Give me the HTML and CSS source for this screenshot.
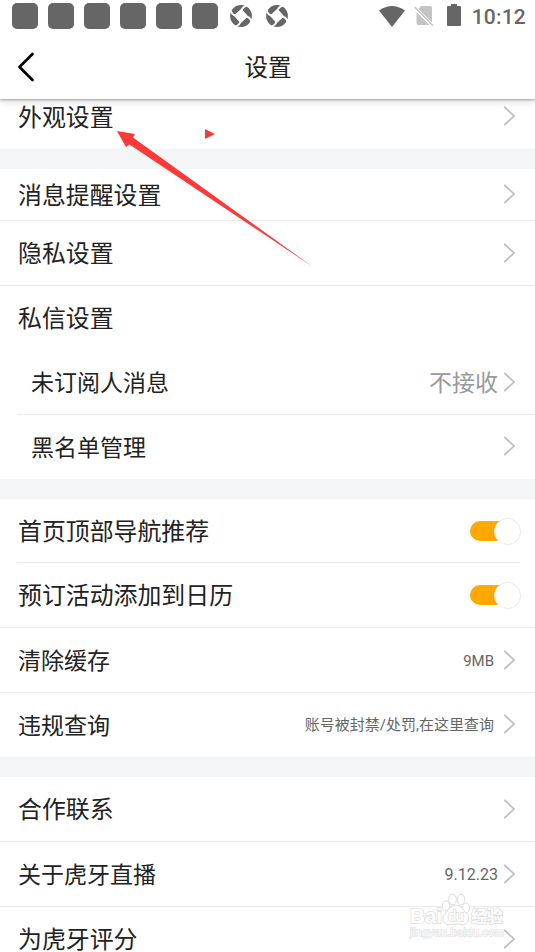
FILE: index.html
```html
<!DOCTYPE html>
<html lang="zh-CN">
<head>
<meta charset="utf-8">
<title>设置</title>
<link rel="stylesheet" href="styles.css">
</head>
<body>
<svg class="defs" width="0" height="0" aria-hidden="true">
  <symbol id="chev" viewBox="0 0 12 20"><path d="M1.300 .8L11 10L1.300 19.200" fill="none" stroke="#bdbdbd" stroke-width="1.700"/></symbol>
  <symbol id="swirl" viewBox="0 0 22 22">
    <circle cx="11" cy="11" r="10.9" fill="#666"/>
    <g fill="none" stroke="#fff" stroke-width="2">
      <path d="M17.500 0Q12.500 2 11.500 5L5 11"/>
      <path d="M17.500 0Q12.500 2 11.500 5L5 11" transform="rotate(90 11 11)"/>
      <path d="M17.500 0Q12.500 2 11.500 5L5 11" transform="rotate(180 11 11)"/>
      <path d="M17.500 0Q12.500 2 11.500 5L5 11" transform="rotate(270 11 11)"/>
    </g>
    <path d="M11.500 4.500L17.500 11.500L10.500 17.500L4.500 10.500Z" fill="#fff"/>
  </symbol>
</svg>
<div class="screen">
  <header class="top">
    <div class="status">
      <div class="apps"><i></i><i></i><i></i><i></i><i></i><i></i></div>
      <svg class="swirl"><use href="#swirl"/></svg>
      <svg class="swirl"><use href="#swirl"/></svg>
      <div class="system">
        <svg width="26" height="21" viewBox="0 0 26 21"><path d="M0 4.500Q13-4.500 26 4.500L13 21Z" fill="#666"/></svg>
        <svg class="sim" width="20" height="22" viewBox="0 0 20 22"><path d="M7 1H16Q18 1 18 3V17.500L4.500 4ZM2.500 7L15.500 20H4.500Q2.500 20 2.500 18Z" fill="#c4c4c4"/><path d="M.7 2L19 20.800" stroke="#c4c4c4" stroke-width="1.600"/></svg>
        <svg class="battery" width="14" height="22" viewBox="0 0 14 22"><path d="M4 0H10V2H13Q14 2 14 3V21Q14 22 13 22H1Q0 22 0 21V3Q0 2 1 2H4Z" fill="#666"/></svg>
        <span class="clock">10:12</span>
      </div>
    </div>
    <div class="nav">
      <svg class="back" width="18" height="30" viewBox="0 0 18 30"><path d="M15.500 2L2.500 15L15.500 28" fill="none" stroke="#000" stroke-width="2.700" stroke-linecap="round" stroke-linejoin="round"/></svg>
      <h1>设置</h1>
    </div>
  </header>
  <main>
    <section>
      <div class="row first"><span class="label">外观设置</span><svg class="chev"><use href="#chev"/></svg></div>
    </section>
    <section>
      <div class="row short line"><span class="label">消息提醒设置</span><svg class="chev"><use href="#chev"/></svg></div>
      <div class="row line"><span class="label">隐私设置</span><svg class="chev"><use href="#chev"/></svg></div>
      <div class="row plain"><span class="label">私信设置</span></div>
      <div class="row line inset"><span class="label sub">未订阅人消息</span><span class="choice">不接收</span><svg class="chev"><use href="#chev"/></svg></div>
      <div class="row plain last"><span class="label sub">黑名单管理</span><svg class="chev"><use href="#chev"/></svg></div>
    </section>
    <section>
      <div class="row toggle line inset both"><span class="label">首页顶部导航推荐</span><span class="switch"></span></div>
      <div class="row line"><span class="label">预订活动添加到日历</span><span class="switch"></span></div>
      <div class="row line"><span class="label small">清除缓存</span><span class="note">9MB</span><svg class="chev"><use href="#chev"/></svg></div>
      <div class="row plain last"><span class="label small">违规查询</span><span class="note">账号被封禁/处罚,在这里查询</span><svg class="chev"><use href="#chev"/></svg></div>
    </section>
    <section>
      <div class="row line"><span class="label">合作联系</span><svg class="chev"><use href="#chev"/></svg></div>
      <div class="row line"><span class="label small">关于虎牙直播</span><span class="note version">9.12.23</span><svg class="chev"><use href="#chev"/></svg></div>
      <div class="row line"><span class="label">为虎牙评分</span><svg class="chev"><use href="#chev"/></svg></div>
    </section>
  </main>
  <svg class="pointer" width="535" height="300" viewBox="0 0 535 300" fill="#fc3838">
    <path d="M117 131L135 134L133 137.500L313 267L129.500 144.500L126 147Z"/>
    <path d="M205 129L215 134L205 139Z"/>
  </svg>
  <svg class="watermark" width="115" height="60" viewBox="400 885 115 60">
    <g class="words">
      <text x="410" y="923" font-size="21" textLength="32">Bai</text>
      <text x="471" y="922" font-size="16" textLength="32">经验</text>
      <text class="url" x="410" y="936" font-size="11" textLength="94">jingyan.baidu.com</text>
    </g>
    <g fill="#fff" stroke="#dcdcdc" stroke-width="1">
      <ellipse cx="446" cy="906" rx="3.800" ry="5"/><ellipse cx="452.500" cy="899.500" rx="3.800" ry="5.300"/><ellipse cx="461" cy="899.500" rx="3.800" ry="5.300"/><ellipse cx="466" cy="908" rx="3.500" ry="5"/>
      <path d="M456 905C450 905 448 911 445 914C440 919 444 926 451 924.500C455 924 458 924 461 924.500C468 926 471 918 467 914C463 911 462 905 456 905Z"/>
    </g>
    <g class="words"><text x="448" y="921" font-size="14" textLength="16">du</text></g>
  </svg>
</div>
</body>
</html>
```
FILE: styles.css
```css
* { box-sizing: border-box; }
body { margin: 0; background: #fff; font-family: Roboto, "Noto Sans CJK SC", sans-serif; color: #222; }
.defs { position: absolute; }
.screen { position: relative; width: 535px; height: 952px; overflow: hidden; }
.top { position: relative; height: 99px; background: #fff; box-shadow: 0 1px 2px rgba(0,0,0,.3), 0 2px 8px rgba(0,0,0,.16); }
.status { display: flex; align-items: center; height: 32px; padding: 0 9px 0 12px; }
.apps { display: flex; gap: 10px; margin-right: 12px; }
.apps i { width: 26px; height: 26px; border-radius: 5px; background: #666; }
.swirl { width: 22px; height: 22px; margin-right: 14px; }
.system { display: flex; align-items: center; margin-left: auto; }
.sim { margin-left: 9px; }
.battery { margin: -2px 0 0 13px; }
.clock { margin: 1px 0 0 11px; font-size: 21px; line-height: 32px; font-weight: 500; color: #666; letter-spacing: .2px; }
.nav { display: grid; grid-template-columns: 61px 1fr 60px; align-items: center; height: 67px; }
.back { margin: 3px 0 0 17px; }
h1 { margin: 4px 0 0; text-align: center; font-size: 23.5px; line-height: 36px; font-weight: 400; }
section { border-bottom: 20px solid #f4f5f7; }
section:last-child { border: 0; }
.row { display: flex; align-items: center; height: 65px; padding: 0 20px 0 18px; background: #fff; }
.row.first { height: 50px; padding-bottom: 15px; }
.row.short { height: 52px; }
.row.plain { height: 64px; }
.row.toggle { height: 64px; }
.line { background: linear-gradient(#ececec, #ececec) 0 100% / 100% 1px no-repeat #fff; }
.line.inset { background-position: 17px 100%; }
.line.both { background-size: 503px 1px; }
.label { flex: 1; font-size: 23.9px; line-height: 36px; white-space: nowrap; }
.label.small, .label.sub { font-size: 23px; }
.label.sub { padding-left: 13px; }
.first .label, .short .label, .plain .label, .toggle .label, .inset .label, .label.small { margin-top: 2px; }
.last .label { margin-top: 3px; }
.chev { width: 12px; height: 20px; margin-bottom: 2px; }
.choice { margin: 2px 5px 0 0; font-size: 23px; line-height: 36px; color: #999; }
.note { margin-right: 9px; font-size: 15px; line-height: 24px; color: #666; }
.version { margin-right: 5px; font-size: 16px; }
.switch { position: relative; width: 50px; height: 20px; margin: -2px -5px 0 0; border-radius: 10px; background: linear-gradient(#ffa800, #ffa800) 0 0 / 38px 20px no-repeat; }
.toggle .switch { margin-top: -1px; }
.switch::after { content: ""; box-sizing: border-box; position: absolute; right: -1px; top: -3px; width: 27px; height: 27px; border: 1px solid #e9e9e9; border-radius: 50%; background: #fff; }
.pointer { position: absolute; left: 0; top: 0; }
.watermark { position: absolute; left: 400px; top: 885px; font-family: "Liberation Sans", "Noto Sans CJK SC", sans-serif; font-weight: 700; }
.words { fill: #fff; stroke: #dcdcdc; stroke-width: 1.4px; paint-order: stroke; }
.url { fill: #fafafa; stroke: #e4e4e4; font-weight: 400; }
```
